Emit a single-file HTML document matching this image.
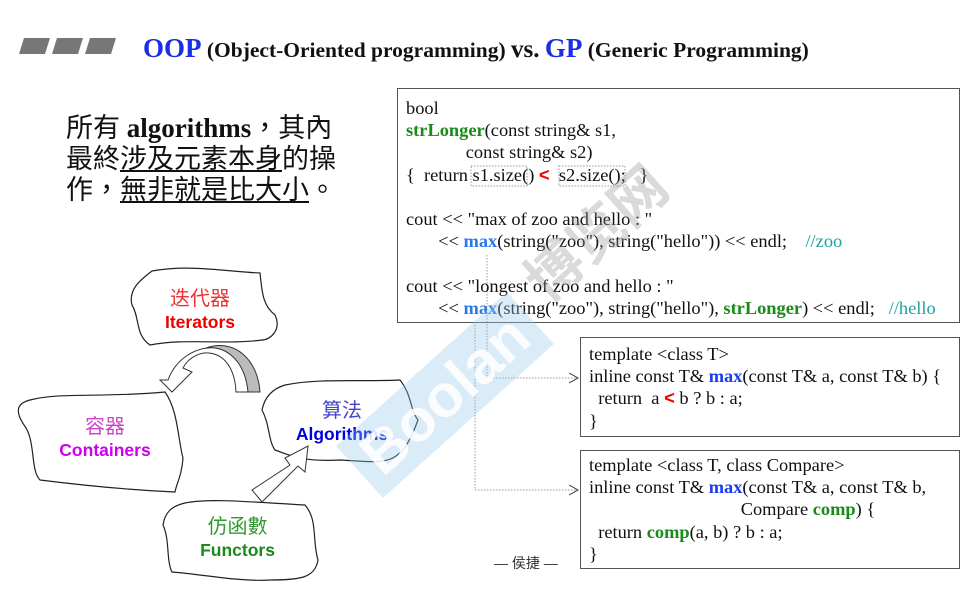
<!DOCTYPE html>
<html><head><meta charset="utf-8"><style>
body{margin:0;width:972px;height:602px;background:#fff;position:relative;overflow:hidden;font-family:"Liberation Serif","Noto Serif CJK SC",serif;}
.a{position:absolute;white-space:pre;}
.c{font-size:18.4px;line-height:22.2px;color:#111;}
.g{color:#1a8a1a;font-weight:bold}
.b{color:#1a3cf0;font-weight:bold}
.bl{color:#2a7ae8;font-weight:bold}
.r{color:#e00;font-weight:bold;font-family:"Liberation Sans",sans-serif}
.t{color:#20a0a0}
.box{position:absolute;border:1.5px solid #555;}
.cl{font-family:"Liberation Sans","Noto Sans CJK SC",sans-serif;text-align:center;position:absolute;}
.cl .z{font-size:20px;font-weight:normal;line-height:23px}
.cl .e{font-size:17.5px;font-weight:bold;line-height:22px}
</style></head><body>
<svg class="a" style="left:0;top:0" width="972" height="602">
<g fill="#777"><polygon points="24,38 50,38 45,54 19,54"/><polygon points="57,38 83,38 78,54 52,54"/><polygon points="90,38 116,38 111,54 85,54"/></g>
<g fill="#fff" stroke="#222" stroke-width="1.2">
<path d="M152,271 C190,264 230,272 260,273 C262,290 262,305 275,315 C282,330 270,340 262,340 C225,345 185,338 150,345 C135,335 140,318 132,305 C128,290 140,280 152,271Z"/>
<path d="M30,400 C60,392 100,398 165,392 C178,410 178,440 183,458 C182,475 176,485 175,492 C130,490 80,485 40,480 C30,470 36,440 24,425 C14,410 18,403 30,400Z"/>
<path d="M285,385 C320,378 360,382 400,380 C412,395 410,410 418,420 C400,470 385,462 340,460 C300,462 290,455 275,450 C268,440 270,425 262,410 C265,395 275,388 285,385Z"/>
<path d="M185,503 C210,498 250,502 305,505 C318,520 312,540 318,560 C315,578 300,580 270,580 C240,582 200,574 172,572 C166,560 170,540 163,525 C165,512 172,506 185,503Z"/>
</g>
<path d="M236,392 C234,345 195,345 183,368 L192,372 L172,392 L160,380 L168,380 C185,335 250,335 258,392Z" fill="#fff" stroke="#333"/>
<path d="M248,392 C245,360 225,345 206,348 C235,338 258,360 260,392Z" fill="#bbb" stroke="#333"/>
<path d="M252,490 L290,465 L285,458 L308,446 L305,472 L298,466 L262,502Z" fill="#fff" stroke="#333"/>
<g stroke="#999" stroke-dasharray="1.5,1.5" fill="none"><path d="M487,255 V378 H578"/><path d="M475,322 V490 H578"/>
<rect x="471" y="166" width="56" height="20"/><rect x="559" y="166" width="66" height="20"/></g>
<g stroke="#333" fill="none"><path d="M569,373 L578,378 L569,383"/><path d="M569,485 L578,490 L569,495"/></g>
</svg>
<div class="a" style="left:143px;top:33px;font-size:21.5px;font-weight:bold;color:#111"><span style="color:#1a2ee8;font-size:27px">OOP</span> (Object-Oriented programming) <span style="font-size:25px">vs.</span> <span style="color:#1a2ee8;font-size:27px">GP</span> (Generic Programming)</div>
<div class="a" style="left:66px;top:113px;font-size:27px;line-height:31px;color:#111;font-family:'Liberation Serif','Noto Sans CJK TC',serif">所有 <b>algorithms</b>，其內<br>最終<u>涉及元素本身</u>的操<br>作，<u>無非就是</u><u>比大小</u>。</div>
<div class="box" style="left:397px;top:88px;width:561px;height:233px"></div>
<div class="a c" style="left:406px;top:97px">bool
<span class="g">strLonger</span>(const string&amp; s1,
             const string&amp; s2)
{  return s1.size() <span class="r">&lt;</span>  s2.size();   }

cout &lt;&lt; "max of zoo and hello : "
       &lt;&lt; <span class="bl">max</span>(string("zoo"), string("hello")) &lt;&lt; endl;    <span class="t">//zoo</span>

cout &lt;&lt; "longest of zoo and hello : "
       &lt;&lt; <span class="bl">max</span>(string("zoo"), string("hello"), <span class="g">strLonger</span>) &lt;&lt; endl;   <span class="t">//hello</span></div>
<div class="box" style="left:580px;top:337px;width:378px;height:98px"></div>
<div class="a c" style="left:589px;top:343px">template &lt;class T&gt;
inline const T&amp; <span class="b">max</span>(const T&amp; a, const T&amp; b) {
  return  a <span class="r">&lt;</span> b ? b : a;
}</div>
<div class="box" style="left:580px;top:450px;width:378px;height:117px"></div>
<div class="a c" style="left:589px;top:454px">template &lt;class T, class Compare&gt;
inline const T&amp; <span class="b">max</span>(const T&amp; a, const T&amp; b,
                                 Compare <span class="g">comp</span>) {
  return <span class="g">comp</span>(a, b) ? b : a;
}</div>
<div class="a" style="left:494px;top:553px;font-size:14px;color:#333;font-family:'Liberation Sans','Noto Sans CJK SC',sans-serif">— 侯捷 —</div>
<div class="cl" style="left:145px;top:288px;width:110px"><div class="z" style="color:#e33">迭代器</div><div class="e" style="color:#e00">Iterators</div></div>
<div class="cl" style="left:45px;top:416px;width:120px"><div class="z" style="color:#c4c">容器</div><div class="e" style="color:#c0e">Containers</div></div>
<div class="cl" style="left:282px;top:400px;width:120px"><div class="z" style="color:#44c">算法</div><div class="e" style="color:#00d">Algorithms</div></div>
<div class="cl" style="left:180px;top:516px;width:115px"><div class="z" style="color:#393">仿函數</div><div class="e" style="color:#1a8a1a">Functors</div></div>
<div class="a" style="left:330px;top:360px;width:230px;height:70px;background:rgba(150,200,235,0.35);transform:rotate(-42deg);color:rgba(255,255,255,0.85);font:bold 60px 'Liberation Sans',sans-serif;line-height:70px;text-align:center">Boolan</div>
<div class="a" style="left:510px;top:190px;transform:rotate(-42deg);color:rgba(150,150,150,0.35);font:bold 56px 'Noto Sans CJK SC',sans-serif">博览网</div>
</body></html>
